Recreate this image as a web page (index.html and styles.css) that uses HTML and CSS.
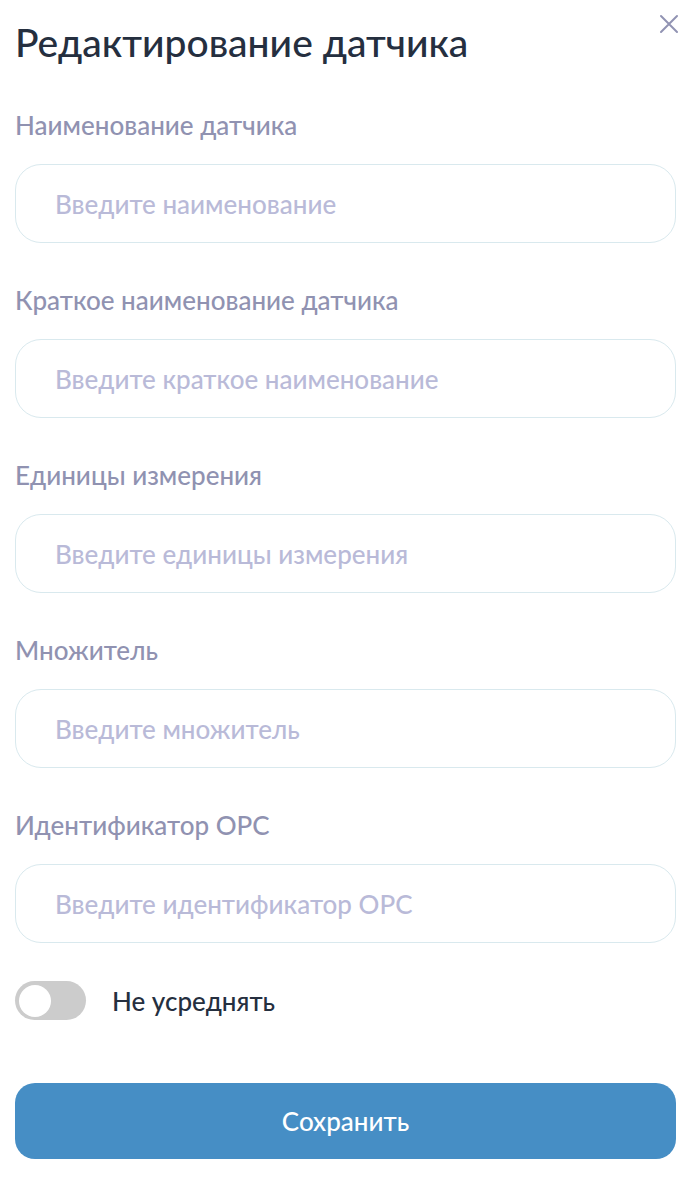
FILE: index.html
```html
<!DOCTYPE html>
<html lang="ru">
<head>
    <meta charset="UTF-8">
    <meta name="viewport" content="width=device-width, initial-scale=1.0">
    <title>Редактирование датчика</title>
    <link rel="stylesheet" href="styles.css">
</head>
<body>
    <form class="modal">
        <div class="modal-header">
            <h1>Редактирование датчика</h1>
            <button type="button" class="close-button" aria-label="Закрыть">
                <svg width="20" height="20" viewBox="0 0 20 20" fill="none" stroke="currentColor" stroke-width="2" stroke-linecap="round">
                    <path d="M2 2L18 18M18 2L2 18"/>
                </svg>
            </button>
        </div>

        <div class="field">
            <label for="name">Наименование датчика</label>
            <input type="text" id="name" placeholder="Введите наименование">
        </div>
        <div class="field">
            <label for="shortName">Краткое наименование датчика</label>
            <input type="text" id="shortName" placeholder="Введите краткое наименование">
        </div>
        <div class="field">
            <label for="units">Единицы измерения</label>
            <input type="text" id="units" placeholder="Введите единицы измерения">
        </div>
        <div class="field">
            <label for="factor">Множитель</label>
            <input type="text" id="factor" placeholder="Введите множитель">
        </div>
        <div class="field">
            <label for="opc">Идентификатор OPC</label>
            <input type="text" id="opc" placeholder="Введите идентификатор OPC">
        </div>

        <div class="switch-row">
            <input type="checkbox" class="switch" id="noAverage">
            <label for="noAverage">Не усреднять</label>
        </div>

        <button type="submit" class="save-button">Сохранить</button>
    </form>
</body>
</html>
```

FILE: styles.css
```css
* {
    box-sizing: border-box;
}

body {
    margin: 0;
    background-color: #ffffff;
    font-family: Lato, 'Liberation Sans', sans-serif;
    font-size: 26px;
    font-weight: 500;
    color: #252f3f;
}

.modal {
    padding: 14px 22px 24px 15px;
}

.modal-header {
    display: flex;
    align-items: flex-start;
    justify-content: space-between;
    margin-bottom: 40px;
}

h1 {
    margin: 4px 0 0;
    font-size: 39px;
    line-height: 48px;
    font-weight: 500;
}

.close-button {
    display: flex;
    margin-right: -3px;
    padding: 0;
    border: none;
    background: none;
    color: #9193b3;
    cursor: pointer;
}

.field {
    display: flex;
    flex-direction: column;
    gap: 20px;
    margin-bottom: 38px;
}

.field label {
    line-height: 38px;
    color: #9092b1;
}

.field input {
    width: 100%;
    height: 79px;
    padding: 0 39px;
    border: 1px solid #d9e9ee;
    border-radius: 26px;
    background: none;
    font: inherit;
    color: #252f3f;
}

.field input::placeholder {
    color: #b9bad8;
    opacity: 1;
}

.field input:focus {
    border-color: #468ec5;
    outline: none;
}

.switch-row {
    display: flex;
    align-items: center;
    gap: 26px;
    margin-bottom: 63px;
}

/* Переключатель */
.switch {
    appearance: none;
    display: flex;
    align-items: center;
    width: 71px;
    height: 39px;
    margin: 0;
    padding: 4px;
    border-radius: 20px;
    background-color: #cccccc;
    cursor: pointer;
}

.switch::before {
    content: "";
    width: 32px;
    height: 32px;
    border-radius: 50%;
    background-color: #ffffff;
}

.switch:checked {
    justify-content: flex-end;
    background-color: #468ec5;
}

.save-button {
    width: 100%;
    height: 76px;
    border: none;
    border-radius: 20px;
    background-color: #468ec5;
    color: #ffffff;
    font: inherit;
    cursor: pointer;
}
```
